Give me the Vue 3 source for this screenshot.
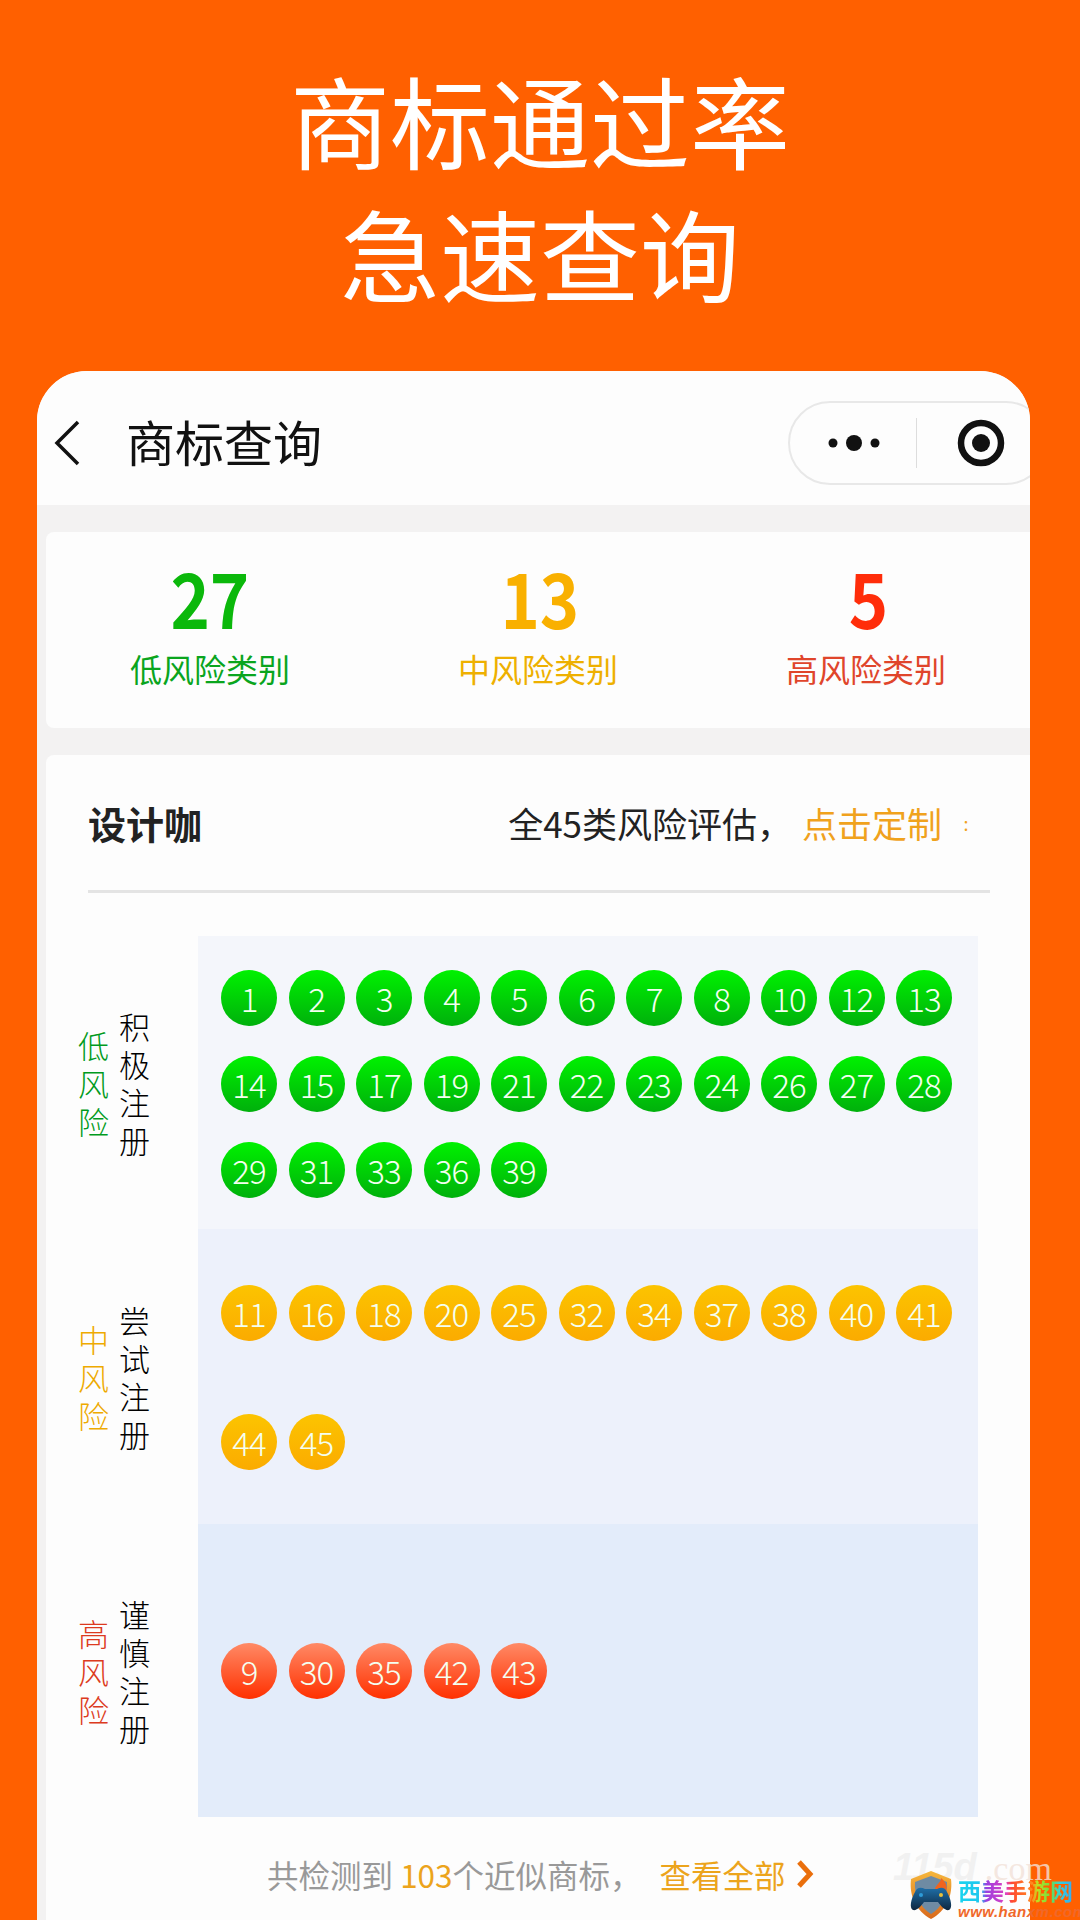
<script setup>
const stats = [
  { num: 27, label: "低风险类别", type: "low" },
  { num: 13, label: "中风险类别", type: "mid" },
  { num: 5, label: "高风险类别", type: "high" }
]

const groups = [
  {
    type: "low",
    risk: "低风险",
    advice: "积极注册",
    items: [1, 2, 3, 4, 5, 6, 7, 8, 10, 12, 13, 14, 15, 17, 19, 21, 22, 23, 24, 26, 27, 28, 29, 31, 33, 36, 39]
  },
  {
    type: "mid",
    risk: "中风险",
    advice: "尝试注册",
    items: [11, 16, 18, 20, 25, 32, 34, 37, 38, 40, 41, 44, 45]
  },
  {
    type: "high",
    risk: "高风险",
    advice: "谨慎注册",
    items: [9, 30, 35, 42, 43]
  }
]
</script>

<template>
  <main class="page">
    <header class="headline">
      <h1>商标通过率</h1>
      <h1>急速查询</h1>
    </header>

    <section class="phone">
      <nav class="nav">
        <svg class="back" width="28" height="46" viewBox="0 0 28 46">
          <path d="M25 2 L4 23 L25 44" fill="none" stroke="#111" stroke-width="3.5" />
        </svg>
        <span class="nav-title">商标查询</span>
        <div class="capsule">
          <svg width="56" height="20" viewBox="0 0 56 20">
            <circle cx="7" cy="10" r="4.5" fill="#111" />
            <circle cx="28" cy="10" r="8" fill="#111" />
            <circle cx="49" cy="10" r="4.5" fill="#111" />
          </svg>
          <i class="capsule-line"></i>
          <svg width="48" height="48" viewBox="0 0 48 48">
            <circle cx="24" cy="24" r="20" fill="none" stroke="#111" stroke-width="6.5" />
            <circle cx="24" cy="24" r="9" fill="#111" />
          </svg>
        </div>
      </nav>

      <div class="stats">
        <div v-for="s in stats" :key="s.type" class="stat" :class="s.type">
          <strong>{{ s.num }}</strong>
          <span>{{ s.label }}</span>
        </div>
      </div>

      <div class="card">
        <div class="card-head">
          <b>设计咖</b>
          <p>全45类风险评估，<em>点击定制</em><small>:</small></p>
        </div>

        <div v-for="g in groups" :key="g.type" class="group" :class="g.type">
          <div class="side">
            <span class="risk">{{ g.risk }}</span>
            <span class="advice">{{ g.advice }}</span>
          </div>
          <div class="balls">
            <span v-for="n in g.items" :key="n" class="ball">{{ n }}</span>
          </div>
        </div>

        <div class="foot">
          共检测到 <em class="count">103</em>个近似商标，<em class="more">查看全部</em>
          <svg width="18" height="30" viewBox="0 0 18 30">
            <path d="M3 3 L14 15 L3 27" fill="none" stroke="#ea6f0c" stroke-width="5" />
          </svg>
        </div>
      </div>
    </section>

    <div class="mark">
      <div class="mark-bg"><i>115d</i><span>.com</span></div>
      <svg class="shield" width="46" height="50" viewBox="0 0 46 50">
        <defs>
          <linearGradient id="rim" x1="0" y1="0" x2="0" y2="1">
            <stop offset="0" stop-color="#f6b73c" />
            <stop offset="1" stop-color="#d9691c" />
          </linearGradient>
          <linearGradient id="pad" x1="0" y1="0" x2="0" y2="1">
            <stop offset="0" stop-color="#1f6fa8" />
            <stop offset="1" stop-color="#0e2740" />
          </linearGradient>
        </defs>
        <path d="M23 1 L43 9 C45 26 38 41 23 49 C8 41 1 26 3 9 Z" fill="url(#rim)" />
        <path d="M23 6 L39 12 C40 25 34 37 23 44 C12 37 6 25 7 12 Z" fill="#6f8ba3" />
        <path d="M27 19 C28 14 33 13 33 8 C38 12 40 17 38 22 Z" fill="#f0641e" />
        <path d="M7 22 C9 17 13 17 17 19 L29 19 C33 17 37 17 39 22 C43 29 45 38 41 40 C37 41 33 36 30 32 L16 32 C13 36 9 41 5 40 C1 38 3 29 7 22 Z" fill="url(#pad)" />
        <circle cx="13" cy="25" r="2" fill="#2d9bd8" />
        <circle cx="33" cy="25" r="2" fill="#e8c03a" />
      </svg>
      <div class="mark-text">
        <b>西美手游网</b>
        <i>www.hanxm.com</i>
      </div>
    </div>
  </main>
</template>

<style scoped>
.page {
  position: relative;
  width: 1080px;
  height: 1920px;
  overflow: hidden;
  background: #ff6000;
  font-family: "Noto Sans CJK SC", "Noto Sans", sans-serif;
}
.headline {
  height: 371px;
  padding-top: 52px;
  box-sizing: border-box;
  text-align: center;
  color: #fff;
}
.headline h1 {
  margin: 0;
  font-size: 100px;
  font-weight: 400;
  line-height: 133px;
}
.phone {
  width: 993px;
  height: 1549px;
  margin-left: 37px;
  border-radius: 50px 50px 0 0;
  overflow: hidden;
  background: #f3f2f2;
}
.nav {
  display: flex;
  align-items: center;
  box-sizing: border-box;
  height: 134px;
  padding: 9px 0 0 16px;
  background: #fdfdfd;
}
.back {
  flex: none;
}
.nav-title {
  margin: 0 0 5px 45px;
  font-size: 49px;
  color: #111;
}
.capsule {
  display: flex;
  align-items: center;
  flex: none;
  box-sizing: border-box;
  width: 260px;
  height: 84px;
  margin-left: auto;
  margin-right: -18px;
  padding-left: 36px;
  border: 2px solid #e8e8e8;
  border-radius: 42px;
}
.capsule-line {
  width: 1px;
  height: 50px;
  margin: 0 40px 0 34px;
  background: #ddd;
}
.stats {
  display: grid;
  grid-template-columns: repeat(3, 1fr);
  height: 196px;
  margin: 27px 0 27px 9px;
  background: #fdfdfd;
  border-radius: 8px 0 0 8px;
}
.stat {
  display: flex;
  flex-direction: column;
  align-items: center;
  padding-top: 22px;
}
.stat strong {
  font-size: 76px;
  line-height: 84px;
  font-weight: 700;
  transform: scaleX(0.88);
}
.stat span {
  margin-top: 8px;
  font-size: 32px;
  line-height: 44px;
}
.stat.low strong { color: #0bb80b; }
.stat.low span { color: #0aa51e; }
.stat.mid strong { color: #f9b000; margin-left: 4px; }
.stat.mid span { color: #eeb000; }
.stat.high strong { color: #ff2d0a; margin-left: 4px; }
.stat.high span { color: #e0452b; }

.card {
  height: 1165px;
  margin-left: 9px;
  background: #fdfdfd;
  border-radius: 8px 0 0 0;
}
.card-head {
  display: flex;
  align-items: center;
  justify-content: space-between;
  height: 135px;
  margin: 0 40px 43px 42px;
  border-bottom: 3px solid #e4e4e4;
  box-sizing: content-box;
}
.card-head b {
  font-size: 38px;
  color: #222;
}
.card-head p {
  display: flex;
  align-items: center;
  margin: 0;
  font-size: 35px;
  color: #222;
}
.card-head em {
  margin-left: 10px;
  font-style: normal;
  color: #f0a21d;
}
.card-head small {
  width: 48px;
  text-align: center;
  font-size: 18px;
  color: #f0a21d;
}
.group {
  display: flex;
}
.side {
  display: flex;
  align-items: center;
  flex: none;
  width: 152px;
  padding-left: 32px;
  gap: 10px;
  box-sizing: border-box;
}
.risk,
.advice {
  width: 31px;
  font-size: 31px;
  line-height: 38px;
  font-weight: 300;
  word-break: break-all;
}
.advice {
  color: #000;
}
.low .risk { color: #009a20; }
.mid .risk { color: #eeaa00; }
.high .risk { color: #dc3a20; }

.balls {
  display: flex;
  flex-wrap: wrap;
  align-content: flex-start;
  box-sizing: border-box;
  width: 780px;
  padding-left: 23px;
  column-gap: 11.5px;
}
.low .balls {
  height: 293px;
  padding-top: 34px;
  row-gap: 30px;
  background: #f4f6fb;
}
.mid .balls {
  height: 295px;
  padding-top: 56px;
  row-gap: 73px;
  background: #edf1fb;
}
.high .balls {
  height: 293px;
  align-content: center;
  background: #e3ecfa;
}
.ball {
  display: flex;
  align-items: center;
  justify-content: center;
  width: 56px;
  height: 56px;
  border-radius: 50%;
  font-size: 33px;
  font-weight: 300;
  color: #f4fff0;
  letter-spacing: -1px;
}
.low .ball { background: linear-gradient(#00f200, #00b00c); }
.mid .ball { background: linear-gradient(#fcc400, #fbab00); }
.high .ball { background: linear-gradient(#ff8a66, #ff3000); }

.foot {
  display: flex;
  align-items: center;
  height: 114px;
  padding-left: 214px;
  font-size: 31.5px;
  color: #999;
  white-space: pre;
}
.foot em {
  font-style: normal;
}
.count {
  color: #eca41c;
}
.more {
  margin-left: 18px;
  color: #eca41c;
}
.foot svg {
  margin-left: 10px;
}

.mark {
  position: absolute;
  left: 893px;
  top: 1850px;
  width: 187px;
  height: 70px;
}
.mark-bg {
  position: absolute;
  left: 0;
  top: -6px;
  color: rgba(236, 236, 236, 0.7);
  font-family: "Liberation Sans", sans-serif;
  font-size: 38px;
  line-height: 46px;
  white-space: nowrap;
}
.mark-bg i {
  font-weight: 700;
}
.mark-bg span {
  margin-left: 8px;
  font-family: "Liberation Serif", serif;
  font-size: 34px;
  color: rgba(242, 226, 216, 0.8);
}
.shield {
  position: absolute;
  left: 15px;
  top: 20px;
}
.mark-text {
  position: absolute;
  left: 65px;
  top: 27px;
  white-space: nowrap;
}
.mark-text b {
  display: block;
  font-size: 23px;
  line-height: 27px;
  font-weight: 700;
  background: linear-gradient(90deg, #18d4ee 0%, #1fc6ee 18%, #9a3ee0 22%, #e040c0 38%, #ff4a30 42%, #ff8a20 58%, #c0e020 62%, #6fe040 72%, #30d0e0 80%, #3aa8f0 90%, #8040f0 100%);
  -webkit-background-clip: text;
  background-clip: text;
  color: transparent;
}
.mark-text i {
  display: block;
  font-family: "Liberation Sans", sans-serif;
  font-size: 15px;
  line-height: 16px;
  font-weight: 700;
  color: #f0682a;
  letter-spacing: 0.5px;
}
</style>

<style>
html,
body {
  margin: 0;
  background: #ff6000;
}
</style>
